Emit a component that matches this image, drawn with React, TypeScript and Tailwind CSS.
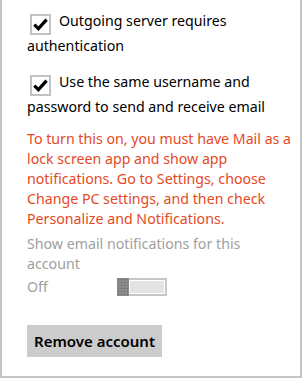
function Check() {
  return (
    <span className="inline-flex items-center justify-center w-[21px] h-[21px] border-2 border-[#c2c2c2] bg-white align-[-5px] ml-[3px] mr-[8px]">
      <svg width="15" height="13" viewBox="0 0 15 13">
        <path d="M1.3 6.6 L5.4 10.6 L13.6 1.6" fill="none" stroke="#000" strokeWidth="3.2" />
      </svg>
    </span>
  );
}

export default function App() {
  return (
    <div className="w-[302px] h-[378px] bg-white border-x-2 border-b-2 border-[#c4c4c4] text-[14.2px] leading-[20px] font-['Noto_Sans',sans-serif] pl-[25px] pr-[2px] overflow-hidden">
      <p className="pt-[10px] leading-[22px] text-black">
        <Check />
        Outgoing server requires authentication
      </p>
      <p className="mt-[14px] leading-[22px] text-black">
        <Check />
        Use the same username and password to send and receive email
      </p>
      <p className="mt-[11px] text-[#e5491f]">
        To turn this on, you must have Mail as a lock screen app and show app notifications. Go to Settings, choose Change PC settings, and then check Personalize and Notifications.
      </p>
      <p className="mt-[5px] pr-[40px] text-[#a0a0a0]">Show email notifications for this account</p>
      <div className="mt-[3px] flex items-center">
        <span className="w-[90px] text-[#a0a0a0]">Off</span>
        <div className="flex w-[50px] h-[18px] border-2 border-[#c6c6c6] bg-[#e3e3e3]">
          <div className="w-[12px] -my-[2px] -ml-[2px] h-[18px] bg-[#8a8a8a] bg-[radial-gradient(#6a6a6a_1px,transparent_1px)] bg-[length:3px_3px]" />
          <div className="flex-1 border border-white" />
        </div>
      </div>
      <button className="mt-[28px] w-[135px] h-[32px] bg-[#cccccc] text-black font-semibold text-[15px]">
        Remove account
      </button>
    </div>
  );
}
